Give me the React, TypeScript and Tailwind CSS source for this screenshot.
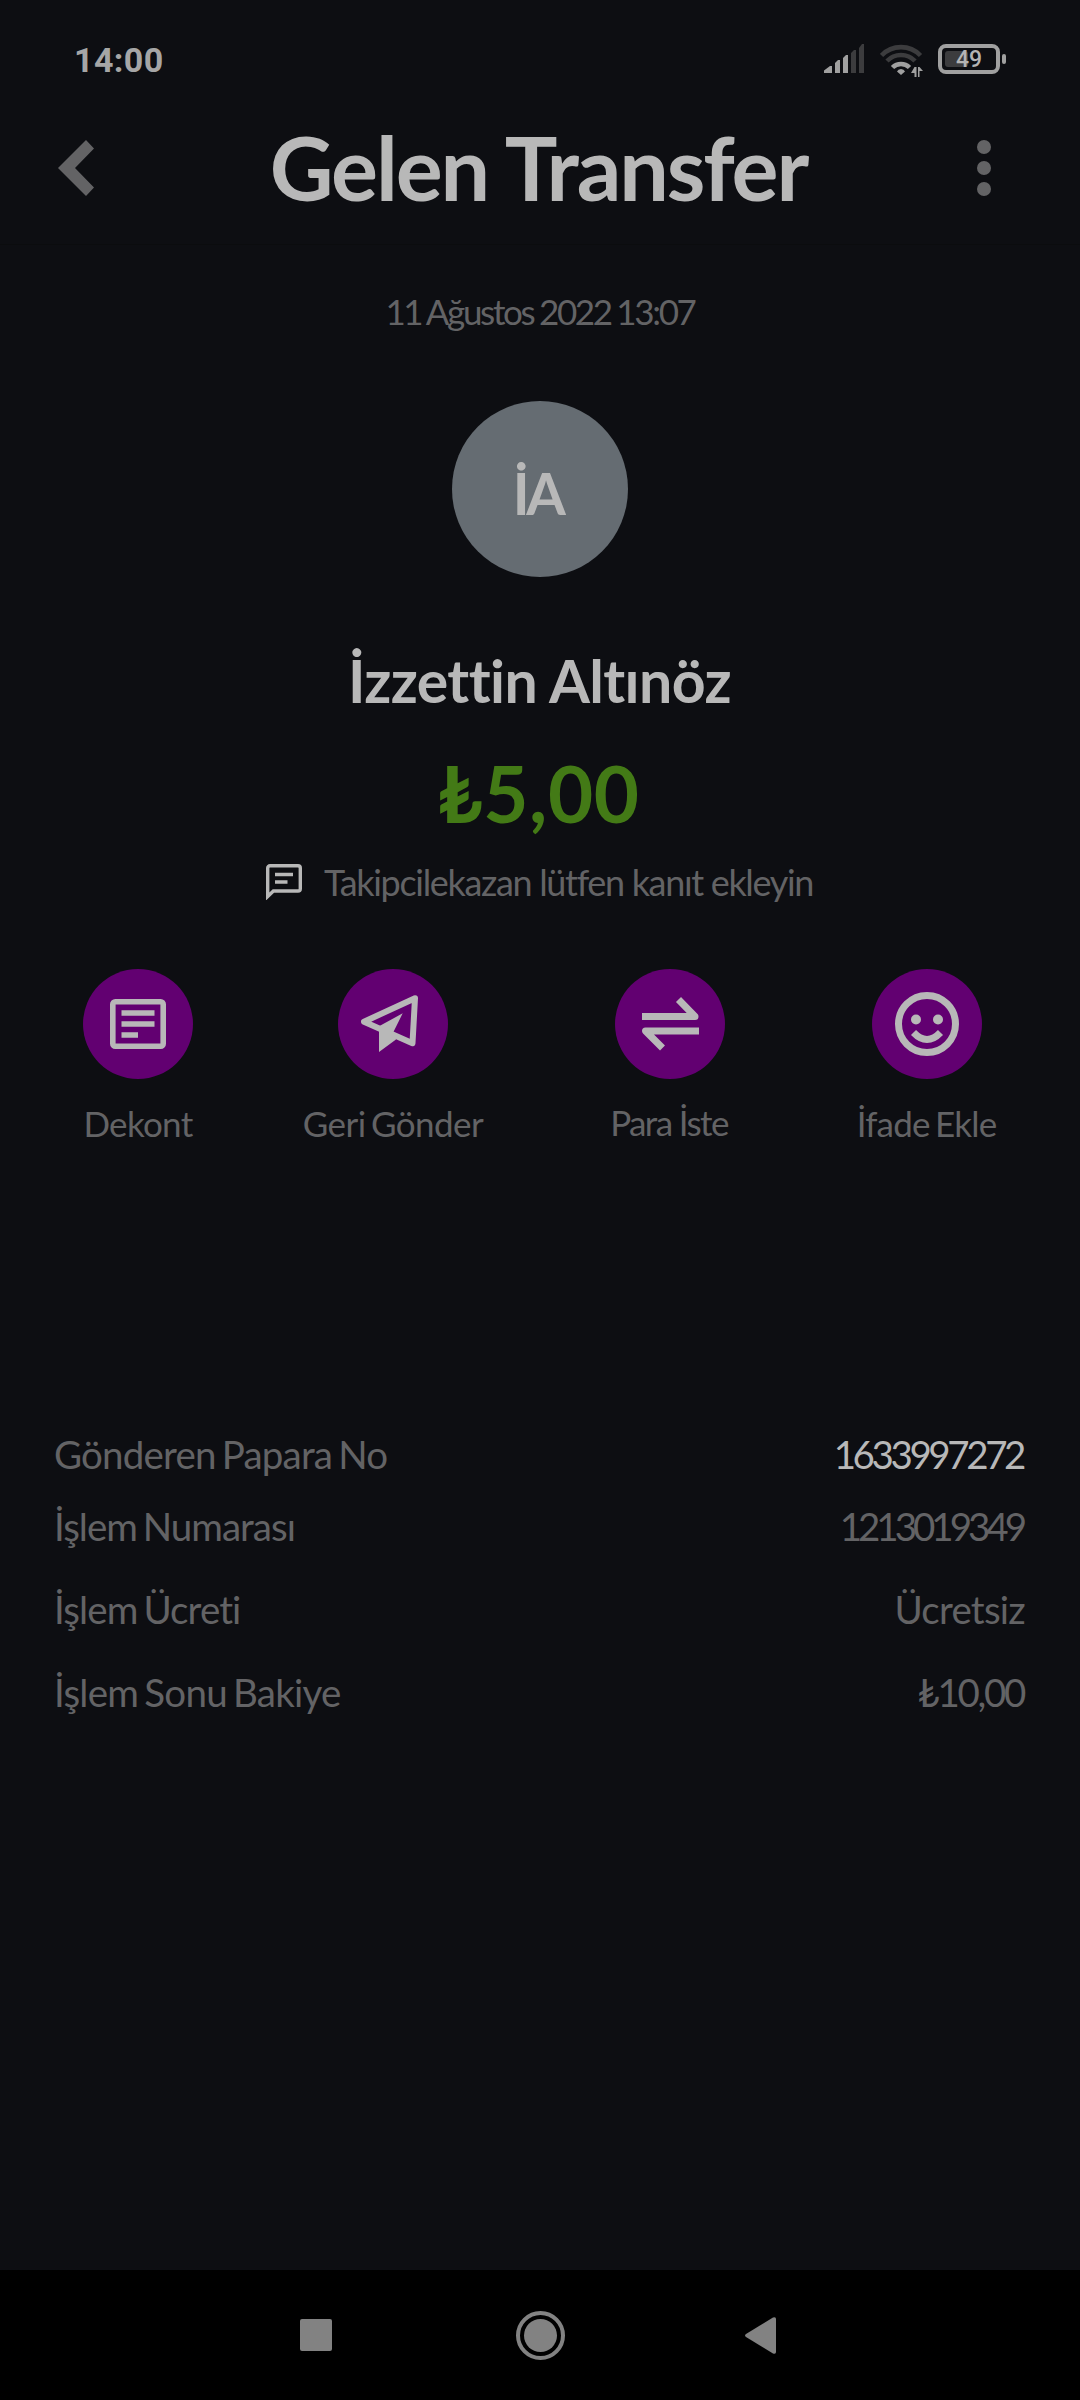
import type { ReactNode } from 'react';

// =============================================================================
// Incoming transfer — detail screen
// =============================================================================

interface Action {
  label: string;
  // column and label sizing differ per action, labels are not equally wide
  column: string;
  text: string;
  icon: ReactNode;
}

interface DetailRow {
  label: string;
  value: string;
  row: string;
  labelClass: string;
  valueClass: string;
}

const actions: Action[] = [
  { label: 'Dekont', column: 'ml-[78px] w-[120px]', text: 'tracking-[-0.7px]', icon: <ReceiptIcon /> },
  {
    label: 'Geri Gönder',
    column: 'ml-[95px] w-[200px]',
    text: 'tracking-[-0.55px] [word-spacing:-3px]',
    icon: <PlaneIcon />,
  },
  { label: 'Para İste', column: 'ml-[107px] w-[140px]', text: '-mt-px mr-[2px] tracking-[-1.6px]', icon: <SwapIcon /> },
  {
    label: 'İfade Ekle',
    column: 'ml-[107px] w-[160px]',
    text: 'mr-px tracking-[-0.77px] [word-spacing:-3px]',
    icon: <SmileIcon />,
  },
];

const rows: DetailRow[] = [
  {
    label: 'Gönderen Papara No',
    value: '1633997272',
    row: 'h-[72px]',
    labelClass: 'tracking-[-0.8px]',
    valueClass: 'mr-[3px] tracking-[-3.4px] text-[#b8b8b8]',
  },
  {
    label: 'İşlem Numarası',
    value: '1213019349',
    row: 'h-[72px]',
    labelClass: 'tracking-[-1px]',
    valueClass: 'mr-[3px] tracking-[-4px]',
  },
  {
    label: 'İşlem Ücreti',
    value: 'Ücretsiz',
    row: 'mt-[5px] h-[83px]',
    labelClass: 'tracking-[-0.9px]',
    valueClass: 'mr-px tracking-[-0.75px]',
  },
  {
    label: 'İşlem Sonu Bakiye',
    value: '₺10,00',
    row: 'h-[83px]',
    labelClass: 'tracking-[-0.75px]',
    valueClass: 'mr-[2px] tracking-[-2.3px]',
  },
];

export default function App() {
  return (
    <div className="flex h-[2400px] w-[1080px] flex-col overflow-hidden bg-[#0d0e12] font-['Lato',sans-serif] text-[#636365]">
      <StatusBar />

      {/* Header */}
      <header className="flex h-[157px] items-center border-b border-[#0b0c0e] pl-[58px] pr-[89px]">
        <svg className="mt-1 h-[56px] w-[36px]" viewBox="0 0 36 56" fill="#636365">
          <path d="M28 0 36 8.5 17 28 36 47.5 28 56 0 28Z" />
        </svg>
        <h1 className="flex-1 whitespace-nowrap pt-px pl-[6px] text-center text-[88px] leading-[156px] font-bold tracking-[-2.1px] text-[#b8b8b8]">
          Gelen Transfer
        </h1>
        <div className="mt-1 flex flex-col gap-[7px]">
          <span className="size-[14px] rounded-full bg-[#636365]" />
          <span className="size-[14px] rounded-full bg-[#636365]" />
          <span className="size-[14px] rounded-full bg-[#636365]" />
        </div>
      </header>

      {/* Sender and amount */}
      <main className="flex flex-1 flex-col items-center">
        <p className="h-[133px] whitespace-nowrap text-[35px] leading-[133px] tracking-[-2.35px] [word-spacing:-1px]">
          11 Ağustos 2022 13:07
        </p>
        <div className="mt-[23px] flex size-[176px] items-center justify-center rounded-full bg-[#656c72]">
          <span className="mt-[8px] mr-[5px] text-[57px] leading-none font-bold tracking-[-3.5px] text-[#b8b8b8]">İA</span>
        </div>
        <h2 className="mt-[64px] mr-px h-[80px] whitespace-nowrap text-[59px] leading-[80px] font-bold tracking-[-0.6px] text-[#b8b8b8]">
          İzzettin Altınöz
        </h2>
        <p className="mt-[32px] mr-[3px] h-[80px] whitespace-nowrap text-[78px] leading-[80px] font-bold tracking-[0.6px] text-[#437a16]">
          ₺5,00
        </p>
        <div className="mt-[25px] mr-px flex h-[48px] items-center gap-[22px]">
          <svg className="h-[36px] w-[36px]" viewBox="0 0 36 36" fill="none" stroke="#b8b8b8" strokeWidth="3.4">
            <path d="M1.7 32.5V4A2.3 2.3 0 0 1 4 1.7H32A2.3 2.3 0 0 1 34.3 4V24.7A2.3 2.3 0 0 1 32 27H7.4Z" />
            <path d="M9 10.5H27M9 18H21.5" />
          </svg>
          <span className="whitespace-nowrap text-[36px] leading-[48px] tracking-[-1.33px]">
            Takipcilekazan lütfen kanıt ekleyin
          </span>
        </div>

        {/* Actions */}
        <div className="mt-[63px] flex w-full">
          {actions.map((action) => (
            <div key={action.label} className={`flex shrink-0 flex-col items-center ${action.column}`}>
              <div className="mb-[20px] flex size-[110px] items-center justify-center rounded-full bg-[#620071]">
                {action.icon}
              </div>
              <span className={`h-[48px] whitespace-nowrap text-[35px] leading-[48px] ${action.text}`}>
                {action.label}
              </span>
            </div>
          ))}
        </div>

        {/* Details */}
        <div className="mt-[272px] flex w-full flex-col pl-[54px] pr-[54px] text-[38.5px] [word-spacing:-3px]">
          {rows.map((row) => (
            <div key={row.label} className={`flex items-center justify-between whitespace-nowrap ${row.row}`}>
              <span className={row.labelClass}>{row.label}</span>
              <span className={row.valueClass}>{row.value}</span>
            </div>
          ))}
        </div>
      </main>

      <NavigationBar />
    </div>
  );
}

// -----------------------------------------------------------------------------
// System bars
// -----------------------------------------------------------------------------

function StatusBar() {
  return (
    <div className="flex h-[88px] items-start justify-between pt-[40px] pl-[74px] pr-[74px]">
      <span className="font-['Roboto',sans-serif] text-[34px] leading-[40px] font-bold tracking-[0.4px] text-[#a6a6a6]">
        14:00
      </span>
      <div className="flex items-start pt-[4px]">
        <svg className="h-[34px] w-[40px]" viewBox="0 0 40 34" fill="#a0a0a0">
          <path d="M0 29V26.5L6 22H8V29Z" />
          <path d="M11 29V19L14 16H16V29Z" />
          <path d="M19 29V14L22 11H24V29Z" />
          <path fill="#3c3c3e" d="M27 29V9L30 6H32V29ZM35 29V4L38 0H40V29Z" />
        </svg>
        <svg className="ml-[16px] h-[34px] w-[44px]" viewBox="0 0 44 34" fill="none" strokeWidth="4.6">
          <path stroke="#3c3c3e" d="M1.5 11.5A27 27 0 0 1 40.5 11.5M7 17A19.5 19.5 0 0 1 35 17" />
          <path stroke="#a0a0a0" d="M12.5 23.5A12 12 0 0 1 29.5 23.5" />
          <path fill="#a0a0a0" d="M21 31 17 27.5Q18 25 21 25T25 27.5Z" />
          <path fill="#a0a0a0" d="M34.5 23H36.5V33H34.5V29H31ZM38 23H39.5L43 27H39.5V33H38Z" />
        </svg>
        <div className="ml-[14px] flex h-[30px] w-[62px] items-center justify-center rounded-[8px] border-4 border-[#a0a0a0]">
          <div className="relative flex h-[16px] w-[48px] items-center justify-center">
            <span className="absolute top-0 left-0 h-[16px] w-[23px] rounded-[3px] bg-[#3c3c3e]" />
            <span className="relative font-['Roboto',sans-serif] text-[23px] leading-none font-medium text-[#b4b4b4]">
              49
            </span>
          </div>
        </div>
        <span className="mt-[10px] ml-[2px] h-[10px] w-[4px] rounded-[2px] bg-[#a0a0a0]" />
      </div>
    </div>
  );
}

function NavigationBar() {
  return (
    <nav className="flex h-[130px] items-center bg-black pl-[300px]">
      <span className="h-[32px] w-[32px] rounded-[2px] bg-[#828282]" />
      <span className="ml-[184px] flex h-[49px] w-[49px] items-center justify-center rounded-full border-4 border-[#828282]">
        <span className="h-[33px] w-[33px] rounded-full bg-[#828282]" />
      </span>
      <svg className="ml-[180px] h-[37px] w-[31px]" viewBox="0 0 31 37" fill="#828282">
        <path d="M1 17 28 .6Q31-.4 31 2V35Q31 37.4 28 36.4L1 20Q-1 18.5 1 17Z" />
      </svg>
    </nav>
  );
}

// -----------------------------------------------------------------------------
// Action icons
// -----------------------------------------------------------------------------

function ReceiptIcon() {
  return (
    <svg className="h-[50px] w-[56px]" viewBox="0 0 56 50" fill="none" stroke="#b8b8b8" strokeWidth="5.6">
      <rect x="2.8" y="2.8" width="50.4" height="44.4" rx="2.5" />
      <path d="M11.5 14H44.5M11.5 25H44.5M11.5 36H28" />
    </svg>
  );
}

function PlaneIcon() {
  return (
    <svg className="mr-[6px] h-[58px] w-[58px]" viewBox="0 0 58 58">
      <path d="M54 3.2 3 26.7 51.5 48.2Z" fill="none" stroke="#b8b8b8" strokeWidth="6" strokeLinejoin="round" />
      <path fill="#b8b8b8" d="M41.7 18.3 18 31.3V57L35 44.5 32.3 37.3Z" />
    </svg>
  );
}

function SwapIcon() {
  return (
    <svg
      className="h-[56px] w-[58px]"
      viewBox="0 0 58 56"
      fill="none"
      stroke="#b8b8b8"
      strokeWidth="7"
      strokeLinejoin="round"
    >
      <path d="M1 20.5H54L37.5 3.5M58 35H4.5L21.5 52" />
    </svg>
  );
}

function SmileIcon() {
  return (
    <svg className="h-[64px] w-[64px]" viewBox="0 0 64 64" fill="none" stroke="#b8b8b8" strokeWidth="7">
      <circle cx="32" cy="32" r="28.5" />
      <path d="M18.5 40.5Q32 54.5 45.5 40.5" />
      <circle cx="21" cy="27.5" r="5" fill="#b8b8b8" stroke="none" />
      <circle cx="43" cy="27.5" r="5" fill="#b8b8b8" stroke="none" />
    </svg>
  );
}
